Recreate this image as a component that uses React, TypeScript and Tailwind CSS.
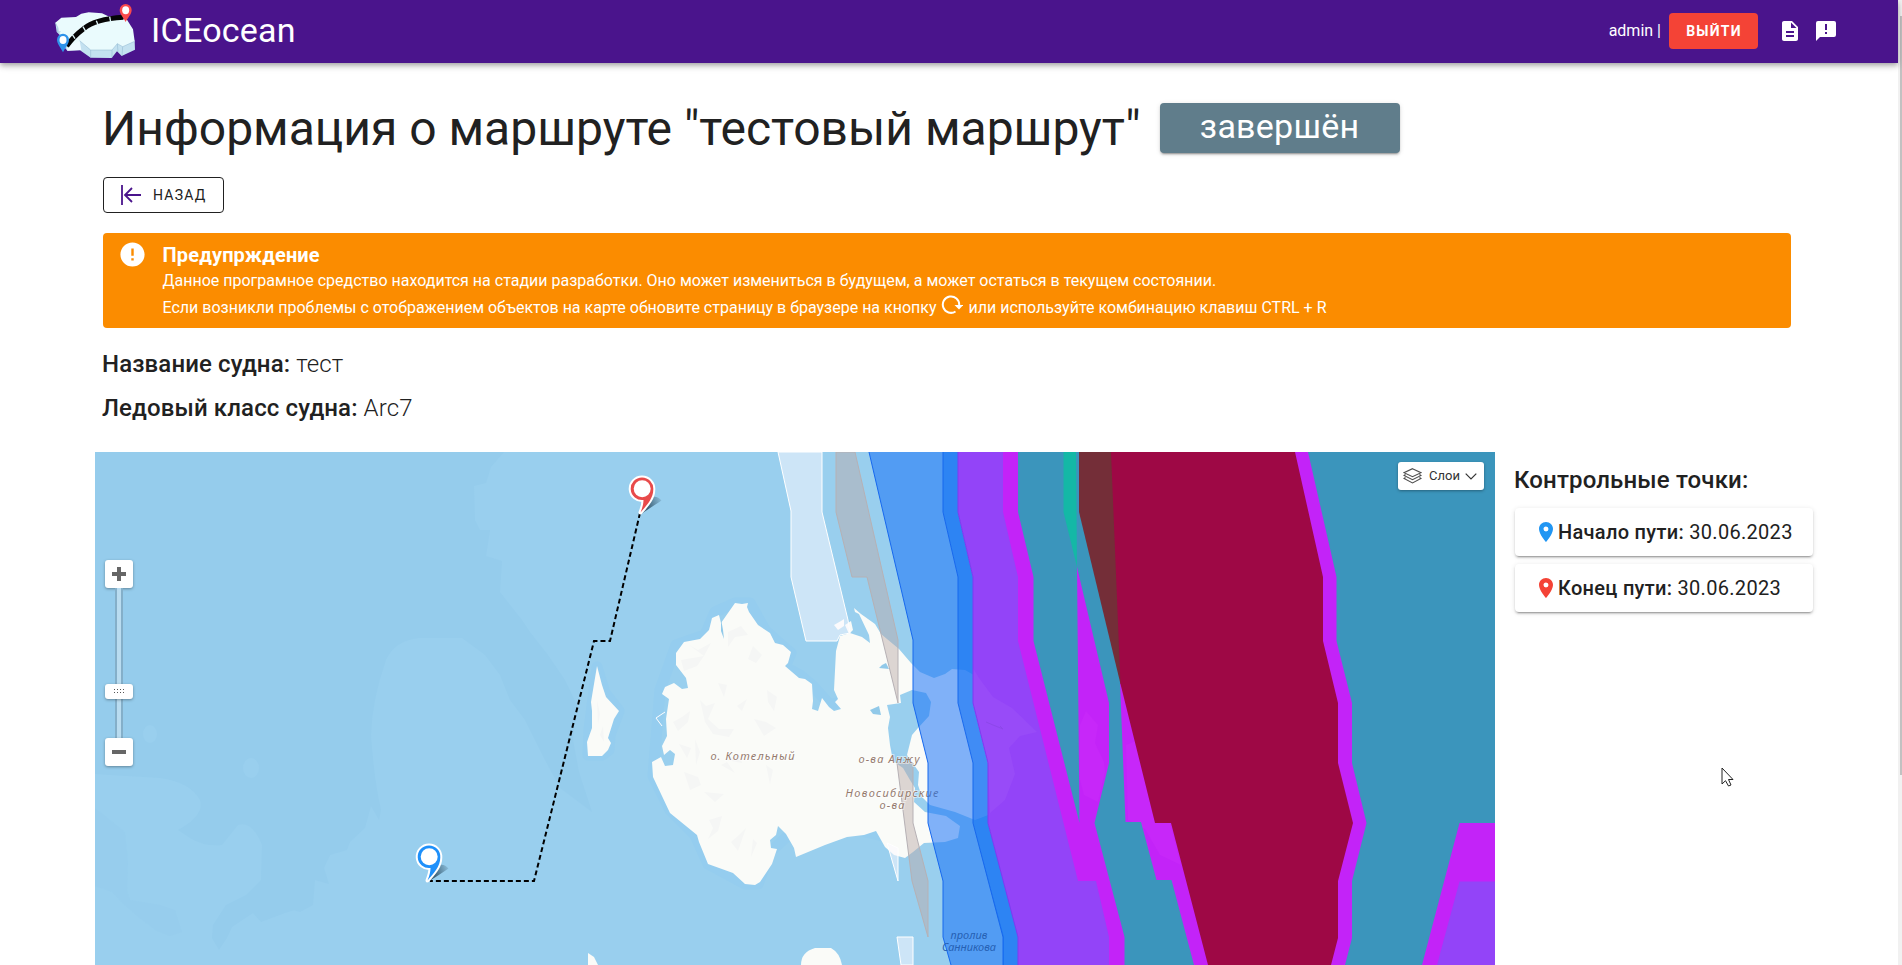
import React from "react";
import { MdDescription, MdLocationOn, MdError } from "react-icons/md";

function Logo() {
  return (
    <svg viewBox="42 9 246 168" className="h-14 w-[82px] shrink-0">
      <path d="M46 68 50 96 62 108 60 125 82 152 120 151 152 173 215 174 231 154 245 168 285 149 284 122 240 90 150 110Z" fill="#c3e1f0" />
      <path d="M46 68 64 53 108 51 124 41 146 37 186 40 208 50 260 58 279 88 284 124 248 140 232 131 216 150 152 150 119 122 108 133 84 140 78 112 62 106 54 84Z" fill="#eafbfd" />
      <path d="M82 142 119 122 124 150 82 152Z" fill="#f0fcff" />
      <path d="M119 122 152 150 152 173 M152 150 216 150 216 173 M216 150 232 131 234 155 M232 131 248 140 284 124 M248 140 246 167 M46 68 54 84 52 97 62 95" fill="none" stroke="#8db4cf" strokeWidth="1.5" />
      <path d="M80 138Q102 108 130 87 166 57 250 52" fill="none" stroke="#050505" strokeWidth="15" />
      <path d="M97 104l8 12M129 80l8 14M169 62l6 15M209 50l3 16" stroke="#dff5f8" strokeWidth="4" />
      <path d="M257 66C250 52 239 43 239 30A18 18 0 0 1 275 30C275 43 264 52 257 66Z" fill="#fb4a4c" />
      <path d="M69 157C62 142 51 132 51 119A18 18 0 0 1 87 119C87 132 76 142 69 157Z" fill="#2f93ea" />
      <ellipse cx="257" cy="31" rx="10.500" ry="12" fill="#fff" />
      <ellipse cx="69" cy="120" rx="10.500" ry="12" fill="#fff" />
    </svg>
  );
}

function MapPin({ x, y, color }: { x: number; y: number; color: string }) {
  return (
    <g transform={`translate(${x} ${y})`}>
      <path d="M0 1 9 -15C13 -18 18 -17 21 -13 15 -9 7 -4 0 1Z" fill="url(#pin-shadow)" />
      <path d="M0 -1C2 -6 3 -10 3 -13.500A11.300 11.300 0 1 1 12.800 -24C12.800 -15 6 -8 0 -1Z" fill="#fff" stroke="#fff" strokeWidth="4" strokeLinejoin="round" />
      <path d="M0 -1C2 -6 3 -10 3 -13.500A11.300 11.300 0 1 1 12.800 -24C12.800 -15 6 -8 0 -1Z" fill={color} />
      <circle cx="1.700" cy="-24.800" r="8.500" fill="#fff" />
    </g>
  );
}

function SeaMap() {
  return (
    <svg viewBox="95 452 1400 513" className="block h-[513px] w-[1400px]" fontFamily="'Noto Sans', sans-serif">
      <defs>
        <linearGradient id="pin-shadow" gradientUnits="userSpaceOnUse" x1="6" y1="-8" x2="21" y2="-14">
          <stop offset="0" stopColor="#1d3b4e" stopOpacity=".75" />
          <stop offset="1" stopColor="#1d3b4e" stopOpacity=".12" />
        </linearGradient>
      </defs>
      <rect x="95" y="452" width="1400" height="513" fill="#99cfee" />
      <g fill="#95ccec">
        <path d="M95 452H504L491 467 486 483 474 486 475 520 480 530 490 530 486 556 502 561 500 592 522 620 530 632 548 655 565 680 577 705 573 740 579 772 592 812 576 800 560 788 545 760 525 720 510 700 500 675 485 655 462 638H420Q395 640 386 660 372 700 371 735 374 780 381 810L379 820 371 806 365 828 350 842 347 850 330 855 324 868 329 884 315 880 313 905 300 912 287 908 289 896 299 893 310 905 285 913 261 922 253 913 232 927 227 938 219 950 212 938 213 925 226 905 246 895 261 880 262 845Q252 820 238 825L222 845Q205 847 190 838L178 830Q205 815 200 800 190 782 160 778L95 774Z" />
        <path d="M95 886 112 892 122 903 138 917 155 930 170 936 182 932 175 910 160 905 130 900 127 890 128 860 125 832 108 818 95 808Z" opacity=".55" />
      </g>
      <g fill="#99cfee">
        <ellipse cx="150" cy="734" rx="7" ry="9" />
        <ellipse cx="251" cy="768" rx="8" ry="10" />
      </g>
      <g fill="#99cfee" stroke="#92cdf0" strokeWidth="11" strokeLinejoin="round" opacity=".55">
        <path d="M735 603 750 603 765 630 785 648 791 653 785 667 800 675 812 685 830 705 846 700 895 760 900 840 840 826 800 846 790 834 770 852 758 884 745 884 708 864 695 835 670 810 653 776 660 690 676 645 705 635 715 612Z" />
        <path d="M597 667 605 693 619 711 610 735 609 750 602 755H588L589 730Z" />
      </g>
      <g fill="#fafbf8">
        <path d="M735 603 742 604 748 603 747 607 749 612 758 625 770 633 775 643 783 645 791 652 788 663 785 666 792 672 799 678 805 679 812 684 813 701 812 709 818 711 822 698 829 707 834 711 841 709 835 702 838 699 834 690 836 651 840 636 850 633 862 637 870 643 869 635 859 614 855 612 854 608 861 614 875 624 881 634 899 649 911 663 920 672 934 678 945 674 952 669 965 670 979 678 993 697 1012 708 1037 732 1020 736 1009 748 1015 774 1005 800 991 814 975 820 955 812 930 805 922 797 918 785 919 772 914 765 907 755 912 735 918 728 929 716 931 702 926 693 912 690 900 695 901 703 887 705 890 717 888 728 890 745 893 761 903 768 910 780 915 788 914 802 925 812 946 816 960 826 958 838 945 842 924 843 913 852 905 858 894 855 885 847 876 831 864 835 847 837 825 845 796 857 794 848 786 834 778 826 776 835 770 840 771 848 777 849 772 864 760 882 755 885 745 884 733 873 708 864 699 842 697 835 670 813 653 777 652 762 661 757 665 766 673 765 675 754 670 750 664 755 662 746 667 736 666 719 669 699 662 694 665 687 674 683 682 689 688 688 686 678 676 665 676 653 684 642 700 639 709 630 712 618 719 615 721 623Z" />
        <path d="M834 625 841 621 844 619 844 626 838 630Z M845 625 851 621 853 630 849 634Z" />
        <path d="M597 666 602 685 606 697 619 711 614 719 608 738 611 743 608 750 602 756H588L587 742 592 728 592 711 591 702Z" />
        <path d="M588 953 594 957 598 965H588Z" />
        <path d="M801 965Q801 952 815 948H831Q840 953 842 965Z" />
      </g>
      <path d="M665 712 656 718 662 726" fill="none" stroke="#fff" />
      <path d="M721 619 723 630 724 639 721 631Z M882 665 886 663 889 669 879 668Z M870 710 879 706 881 715 873 714Z" fill="#91c9e9" />
      <g fill="#f5f6f5">
        <path d="M681 660 704 656 697 666 684 671Z M689 645 698 650 711 643 704 656Z M728 632 741 626 748 635 735 637 728 647Z M753 646 762 655 756 663 748 659Z M700 700 706 706 715 703 708 719 719 729 734 729 729 737 713 734 705 722Z M673 722 682 717 690 711 688 722 678 731Z M754 719 766 722 776 728 764 736Z M767 690 777 697 774 711 768 702Z M679 744 691 748 687 758Z M695 739 700 752 696 765Z M684 772 698 777 701 785 690 790Z M721 765 727 762 735 773Z M766 765 773 770 770 784Z M704 792 724 794 715 802Z M709 820 722 816 718 831 708 839 713 828Z M731 842 739 835 746 828 738 851Z M753 839 757 843 751 857Z M718 683 727 685 724 697Z M737 706 747 699 742 711Z M727 760 739 754 742 763Z" />
        <path d="M597 700 600 714 598 724Z M600 735 603 726 604 742Z" />
      </g>

      <g fill="#fcf9ff" fillOpacity=".53" stroke="#fff" strokeWidth="1">
        <path d="M778 452 791 511V577L806 641H837L840 635 850 633 848 620 822 512V452Z" />
        <path d="M887 843 898 848V881Z M897 937H913V965H901Z" />
      </g>
      <g fill="#bca9a8" fillOpacity=".47" stroke="#b6b1b5" strokeWidth="1">
        <path d="M836 452H855L898 640V703L867 577H852L836 512Z" />
        <path d="M897 763H913V823L928 881V937L912 881Z" />
      </g>
      <g fontSize="11" fontStyle="italic" fill="#957a6e" textAnchor="middle" stroke="#fff" strokeWidth="2" strokeOpacity=".5" paintOrder="stroke">
        <text x="752.500" y="760" textLength="84">о. Котельный</text>
        <text x="889" y="762.500" textLength="61">о-ва Анжу</text>
        <text x="892" y="797" textLength="93">Новосибирские</text>
        <text x="892" y="809" textLength="25">о-ва</text>
      </g>

      <path d="M869 452 913 640V703L928 763V823L943 881V937L951 965H1004V937L973 823V763L958 703V577L943 512V452Z" fill="#136ff7" fillOpacity=".53" />
      <path d="M943 452V512L958 577V703L973 763V823L1003 937V965H1019V937L988 823V763L973 703V577L958 512V452Z" fill="#1270f4" fillOpacity=".8" />
      <path d="M958 452V512L973 577V703L988 763V823L1018 937V965H1120V452Z" fill="#9344f8" />
      <path d="M973 668 979 678 993 697 1012 708 1037 732 1020 736 1009 748 1015 774 1005 800 990 813 988 763 973 703Z" fill="#984bf8" />
      <path d="M986 722 993 725 1003 729 1000 726" fill="none" stroke="#8d47ea" />
      <g fill="none" stroke="#1768ee" strokeWidth="1">
        <path d="M869 452 913 640V703L928 763V823L943 881V937L951 965" />
        <path d="M943 452V512L958 577V703L973 763V823L1003 937V965" />
      </g>
      <path d="M958 452V512L973 577V703L988 763V823L1018 937V965" fill="none" stroke="#7e3af0" />
      <path d="M1003 452V512L1018 577V641L1078 881H1096L1109 937V965H1495V452Z" fill="#c323f8" />
      <g fill="#c727f9">
        <path d="M1086 711 1098 725 1095 743 1104 762 1105 772 1098 802 1084 795 1080 780V725Z" />
        <path d="M1126 745 1138 740 1170 823 1181 865 1160 855 1145 829 1128 820Z" />
      </g>
      <path d="M1018 452V512L1033.500 577V641L1079.500 823 1077 567 1109 703V763L1094.500 823 1124.500 937V965H1194L1171.500 880H1156.500L1141 822H1125.500L1120 682 1150 452Z" fill="#3b95bc" />
      <path d="M1063.500 452H1076L1077 567 1063.500 512Z" fill="#14b8a6" />
      <path d="M1079 452V512L1120.500 684 1160 690V452Z" fill="#742e38" />
      <path d="M1111 452H1295L1323 577V641L1338 703V763L1353 823 1338 881V938L1331 965H1208L1171 823H1155L1120.500 684Z" fill="#9e0845" />
      <path d="M1308 452 1336.500 577V641L1352 703V763L1366.500 823 1352 881V938L1345 965H1422L1459.500 823H1495V452Z" fill="#3b95bc" />
      <path d="M1459.500 881.500H1495V965H1437Z" fill="#9344f8" />
      <g fontSize="11" fontStyle="italic" fill="#2661b4" textAnchor="middle">
        <text x="969" y="939" textLength="37">пролив</text>
        <text x="969" y="950.500" textLength="54">Санникова</text>
      </g>

      <path d="M640 513 610 641H594L534 881H430" fill="none" stroke="#000" strokeWidth="2" strokeDasharray="5 3" />
      <MapPin x={640.5} y={513.5} color="#e84a4a" />
      <MapPin x={427.5} y={881.5} color="#1e90fa" />
    </svg>
  );
}

function ZoomControl() {
  const key = "flex h-7 w-7 items-center justify-center rounded-[3px] bg-white shadow-[0_1px_3px_rgba(0,0,0,0.35)]";
  return (
    <div className="absolute left-[10px] top-[108px] flex w-7 flex-col items-center">
      <div className={key}>
        <svg viewBox="0 0 14 14" className="h-[14px] w-[14px]"><path d="M7 0V14M0 7H14" stroke="#666" strokeWidth="4" /></svg>
      </div>
      <div className="flex h-[150px] w-2 flex-col items-center justify-end border-x-2 border-[#84afc9] bg-[#b9dcf0] pb-[39px]">
        <div className="grid h-[15px] w-7 shrink-0 place-items-center rounded-[3px] bg-white shadow-[0_1px_3px_rgba(0,0,0,0.35)]">
          <svg viewBox="0 0 11 5" className="h-[5px] w-[11px]"><path d="M0 .5H11M0 3.500H11" stroke="#555" strokeWidth="1" strokeDasharray="1 2" /></svg>
        </div>
      </div>
      <div className={key}>
        <svg viewBox="0 0 14 14" className="h-[14px] w-[14px]"><path d="M0 7H14" stroke="#666" strokeWidth="4" /></svg>
      </div>
    </div>
  );
}

function LayersButton() {
  return (
    <button className="absolute right-[11px] top-[10px] flex h-7 w-[86px] items-center rounded-[3px] bg-white pl-[5px] text-[13px] text-[#333] shadow-[0_1px_3px_rgba(0,0,0,0.35)]">
      <svg viewBox="0 0 19 16" className="h-4 w-[19px]" fill="none" stroke="#4d4d4d" strokeWidth="1.100">
        <path d="M9.500 .7 18 4.700 9.500 8.700 1 4.700ZM2.500 6.500 1 7.500 9.500 11.700 18 7.500 16.500 6.500M2.500 9.500 1 10.500 9.500 15 18 10.500 16.500 9.500" />
      </svg>
      <span className="ml-[7px] w-[31px]">Слои</span>
      <svg viewBox="0 0 12 7" className="ml-[5px] h-[7px] w-3" fill="none" stroke="#333" strokeWidth="1.200"><path d="M.7 .7 6 6 11.300 .7" /></svg>
    </button>
  );
}

function PointCard({ label, date, tone }: { label: string; date: string; tone: string }) {
  return (
    <div className="flex h-12 w-[298px] items-center rounded bg-white pl-[19px] text-[20px] leading-8 shadow-[0_3px_1px_-2px_rgba(0,0,0,0.2),0_2px_2px_0_rgba(0,0,0,0.14),0_1px_5px_0_rgba(0,0,0,0.12)]">
      <MdLocationOn className={tone} size={24} />
      <span className="whitespace-nowrap tracking-[0.3px]"><b className="font-medium">{label}</b> {date}</span>
    </div>
  );
}

export default function App() {
  return (
    <div className="relative flex h-[965px] w-full overflow-hidden bg-white font-['Roboto',sans-serif] text-[#212121]">
      <div className="flex min-w-0 flex-1 flex-col">
        <header className="z-10 flex h-[63px] shrink-0 items-center bg-[#4a148c] pb-[2px] pl-[54px] text-white shadow-[0_2px_4px_-1px_rgba(0,0,0,0.2),0_4px_5px_0_rgba(0,0,0,0.14),0_1px_10px_0_rgba(0,0,0,0.12)]">
          <Logo />
          <span className="ml-[15px] pb-[2px] text-[34px] leading-10 tracking-[0.25px]">ICEocean</span>
          <span className="ml-auto text-base">admin |</span>
          <button className="ml-2 mr-[20px] h-9 w-[89px] rounded bg-[#f44336] pl-px pt-px text-[14px] font-bold uppercase tracking-[1.25px]">Выйти</button>
          <MdDescription size={24} />
          <svg viewBox="0 0 24 24" className="ml-3 mr-[60px] h-6 w-6">
            <path d="M20 2H4a2 2 0 0 0-2 2v18l4-4h14a2 2 0 0 0 2-2V4a2 2 0 0 0-2-2Z" fill="#fff" />
            <path d="M11 5H13V11H11ZM11 13H13V15H11Z" fill="#4a148c" />
          </svg>
        </header>

        <section className="flex flex-col items-start pl-[103px] pt-10">
          <div className="-ml-px flex h-[50px] items-center">
            <h1 className="whitespace-nowrap pt-[2px] text-[48px] leading-[50px]">Информация о маршруте "тестовый маршрут"</h1>
            <div className="ml-[19px] flex h-[50px] w-[240px] justify-center rounded bg-[#607d8b] text-[34px] leading-[46px] tracking-[0.25px] text-white shadow-[0_3px_1px_-2px_rgba(0,0,0,0.2),0_2px_2px_0_rgba(0,0,0,0.14),0_1px_5px_0_rgba(0,0,0,0.12)]">завершён</div>
          </div>
          <button className="mt-6 flex h-9 w-[121px] items-center rounded border border-[#212121] pl-[17px] text-[14px] uppercase tracking-[1.25px]">
            <svg viewBox="0 0 20 20" className="h-5 w-5" fill="none" stroke="#4a148c" strokeWidth="1.800"><path d="M1 0V20M20 10H4M11 3 4 10 11 17" /></svg>
            <span className="ml-3">Назад</span>
          </button>
          <div className="mt-5 flex h-[95px] w-[1688px] rounded bg-[#fb8c00] pl-[17px] pt-[10px] text-white">
            <MdError size={29} className="-ml-[2px] -mt-[3px] shrink-0" />
            <div className="ml-[15.5px] whitespace-nowrap">
              <div className="text-[20px] font-bold leading-6 tracking-[0.15px]">Предупрждение</div>
              <div className="text-[16px] leading-[27px]">Данное програмное средство находится на стадии разработки. Оно может измениться в будущем, а может остаться в текущем состоянии.</div>
              <div className="flex items-center text-[16px] leading-[27px]">
                Если возникли проблемы с отображением объектов на карте обновите страницу в браузере на кнопку
                <svg viewBox="0 0 22 20" className="mx-[5px] -mt-[5px] h-5 w-[22px]" fill="none" stroke="#fff" strokeWidth="2"><path d="M14.500 16.500A8.200 8.200 0 1 1 18.200 10" /><path d="M13.500 10H22.300L18 14.500Z" fill="#fff" stroke="none" /></svg>
                или используйте комбинацию клавиш CTRL + R
              </div>
            </div>
          </div>
          <p className="-ml-px mt-5 text-[24px] font-light leading-8 tracking-[0.12px]"><b className="font-medium">Название судна:</b> тест</p>
          <p className="-ml-px mt-3 text-[24px] font-light leading-8 tracking-[0.12px]"><b className="font-medium">Ледовый класс судна:</b> Arc7</p>
        </section>

        <section className="mt-7 flex pl-[95px]">
          <div className="relative h-[513px] w-[1400px] shrink-0 overflow-hidden">
            <SeaMap />
            <ZoomControl />
            <LayersButton />
          </div>
          <aside className="ml-[19px] flex flex-col pt-3">
            <h2 className="mb-3 text-[24px] font-medium leading-8 tracking-[0.15px]">Контрольные точки:</h2>
            <div className="flex flex-col gap-2 pl-px">
              <PointCard label="Начало пути:" date="30.06.2023" tone="text-[#2196f3]" />
              <PointCard label="Конец пути:" date="30.06.2023" tone="text-[#f44336]" />
            </div>
          </aside>
        </section>
      </div>
      <div className="h-full w-1 shrink-0 bg-[#f1f1f1] pl-[2px] pt-4">
        <div className="h-[759px] bg-[#c1c1c1]" />
      </div>
      <svg viewBox="0 0 13 20" className="absolute left-[1721px] top-[767px] h-5 w-[13px]"><path d="M1 1V17L4.500 13.700 7.500 19 10 18 7.500 12.500H12Z" fill="#fff" stroke="#222" /></svg>
    </div>
  );
}
